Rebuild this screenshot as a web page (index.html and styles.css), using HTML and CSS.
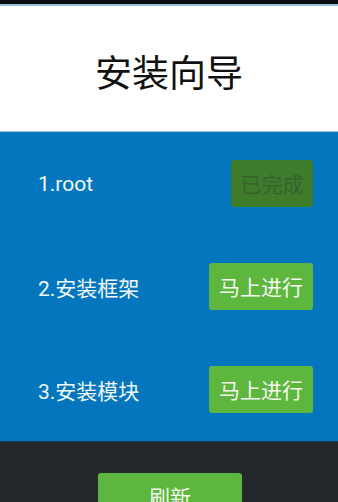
FILE: index.html
```html
<!DOCTYPE html>
<html lang="zh">
<head>
<meta charset="utf-8">
<link rel="stylesheet" href="styles.css">
</head>
<body>
<div class="statusbar"></div>
<header class="header"><h1 class="title">安装向导</h1></header>
<main class="steps">
  <div class="step"><span class="label">1.root</span><button class="btn btn-done">已完成</button></div>
  <div class="step"><span class="label">2.安装框架</span><button class="btn btn-go">马上进行</button></div>
  <div class="step"><span class="label">3.安装模块</span><button class="btn btn-go">马上进行</button></div>
</main>
<footer class="footer"><button class="btn btn-refresh">刷新</button></footer>
</body>
</html>
```
FILE: styles.css
```css
html, body { margin: 0; padding: 0; }
body {
  width: 338px;
  height: 502px;
  overflow: hidden;
  font-family: Roboto, "Noto Sans CJK SC", sans-serif;
  background: #24272c;
}
.statusbar {
  height: 4px;
  background: #0a0c0e;
  border-bottom: 2px solid #8dc4dc;
}
.header {
  height: 125px;
  background: #ffffff;
  border-bottom: 1px solid #9ccbe0;
  display: flex;
  align-items: center;
  justify-content: center;
}
.title {
  margin: 0;
  font-family: "Noto Sans CJK SC", sans-serif;
  font-weight: 400;
  font-size: 37px;
  color: #111;
  position: relative;
  top: 2px;
}
.steps {
  background: #0476bd;
  display: flex;
  flex-direction: column;
  border-bottom: 1px solid #173a52;
}
.step {
  height: 103px;
  display: flex;
  align-items: center;
  justify-content: space-between;
  padding: 0 25px 0 38px;
}
.label {
  color: #f2f8fc;
  font-size: 21px;
}
.btn {
  border: none;
  border-radius: 3px;
  font-family: "Noto Sans CJK SC", sans-serif;
  font-size: 21px;
  height: 47px;
  padding: 0;
  line-height: 47px;
  white-space: nowrap;
  text-align: center;
}
.btn-done {
  background: #3e7b2b;
  color: #376230;
  width: 82px;
}
.btn-go {
  background: #5db63e;
  color: #f4faef;
  width: 104px;
}
.footer {
  height: 61px;
  display: flex;
  justify-content: center;
  align-items: flex-start;
  padding-top: 31px;
  box-sizing: border-box;
}
.btn-refresh {
  background: #5db63e;
  color: #f4faef;
  width: 144px;
  margin-left: 2px;
}
```
